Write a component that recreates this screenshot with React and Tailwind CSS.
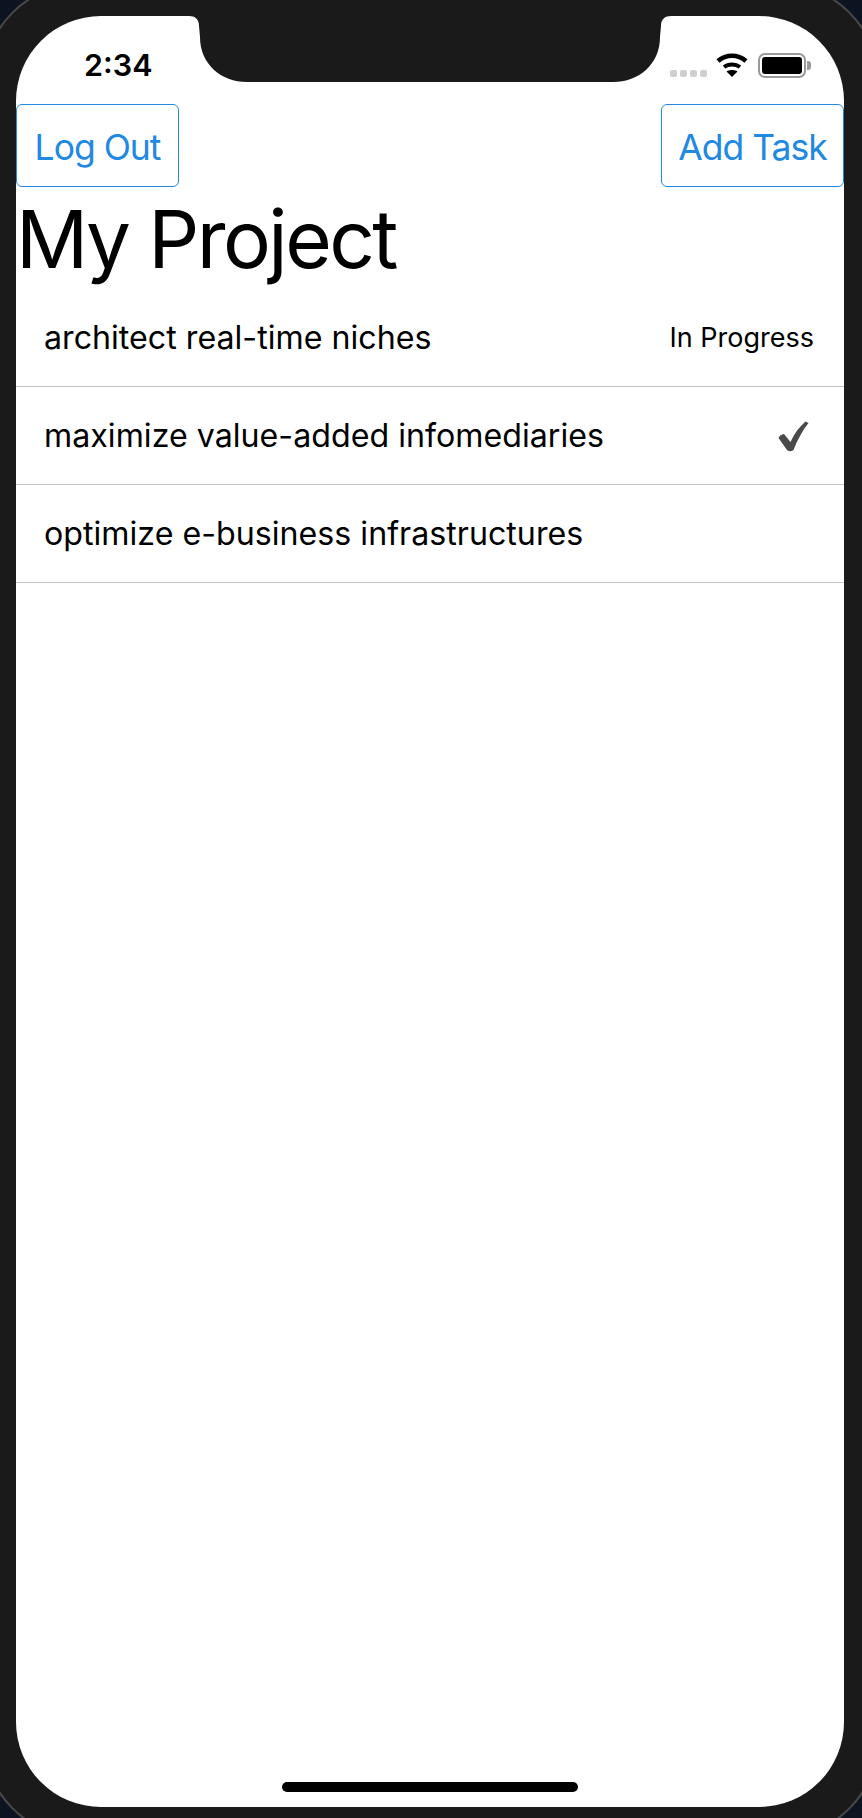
const tasks = [
  { name: "architect real-time niches", status: "In Progress" },
  { name: "maximize value-added infomediaries", status: "Done" },
  { name: "optimize e-business infrastructures", status: null },
];

const Signal = () => (
  <div className="flex gap-[3px] mt-[17px]">
    {[0, 1, 2, 3].map((i) => (
      <div key={i} className="w-[7px] h-[7px] rounded-[2px] bg-[#cfcfcf]" />
    ))}
  </div>
);

const Wifi = () => (
  <svg width="32" height="24" viewBox="0 0 32 24" className="ml-[9px]">
    <path d="M2 8C10 1 22 1 30 8" fill="none" stroke="#000" strokeWidth="4.5" />
    <path d="M8 14C12.5 10.5 19.5 10.5 24 14" fill="none" stroke="#000" strokeWidth="4" />
    <path d="M16 24L10.5 18.5C13.5 16.5 18.5 16.5 21.5 18.5Z" fill="#000" />
  </svg>
);

const Battery = () => (
  <div className="flex items-center ml-[10px]">
    <div className="w-[48px] h-[25px] rounded-[7px] border-2 border-[#999] p-[2px]">
      <div className="w-full h-full rounded-[3px] bg-black" />
    </div>
    <div className="w-[4px] h-[9px] ml-[1px] rounded-r-[3px] bg-[#999]" />
  </div>
);

const Check = () => (
  <svg width="31" height="31" viewBox="0 0 31 31" className="mr-[5px]">
    <path
      d="M0.5 17Q2 13.5 6 13L12.5 21C16 13 21 6 27.5 0.5L30.5 2C24 10 19 20 15.5 29Q12 31.5 9 29Z"
      fill="#4a4a4a"
    />
  </svg>
);

// dark cut-out at the top of the screen, with the small flared corners
const Notch = () => (
  <svg width="482" height="66" viewBox="0 0 482 66" className="absolute top-0 left-[173px]">
    <path
      d="M0 0C6 0 10 3 10 10L11 21C11 48 32 66 58 66H424C450 66 471 48 471 21L472 10C472 3 476 0 482 0Z"
      fill="#1a1a1a"
    />
  </svg>
);

const NavButton = ({ width, children }) => (
  <button className={`${width} h-[83px] pt-1 border border-[#2189e2] rounded-[6px] bg-white text-[#2189e2] text-[35.5px] tracking-[-1px] leading-none`}>
    {children}
  </button>
);

export default function App() {
  return (
    <div
      className="w-[862px] h-[1818px] bg-[#0b1420] overflow-hidden"
      style={{ fontFamily: "Inter, 'Noto Sans', sans-serif" }}
    >
      <div className="w-[898px] h-[1857px] -ml-[18px] -mt-[18px] rounded-[102px] border-2 border-[#484848] bg-[#1a1a1a] pt-[32px] pl-[32px]">
        <div className="relative w-[828px] h-[1791px] rounded-[85px] bg-white overflow-hidden flex flex-col">
          <Notch />

          <div className="h-[88px] flex items-start justify-between">
            <div className="pl-[68px] pt-[31px] text-[30.5px] leading-[36px] font-semibold text-black">
              2:34
            </div>
            <div className="flex items-start pt-[37px] pr-[33px]">
              <Signal />
              <Wifi />
              <Battery />
            </div>
          </div>

          <div className="flex justify-between">
            <NavButton width="w-[163px]">Log Out</NavButton>
            <NavButton width="w-[183px]">Add Task</NavButton>
          </div>

          <h1 className="h-[102px] text-[80px] tracking-[-2.6px] leading-[103px] text-black">My Project</h1>

          <ul>
            {tasks.map((task) => (
              <li
                key={task.name}
                className="h-[98px] pt-[2px] flex items-center justify-between pl-7 pr-[30px] border-b border-[#c4c4c6] text-[32.2px] text-black"
              >
                <span>{task.name}</span>
                {task.status === "Done" ? (
                  <Check />
                ) : (
                  task.status && <span className="text-[27px]">{task.status}</span>
                )}
              </li>
            ))}
          </ul>

          <div className="absolute bottom-[15px] left-[266px] w-[296px] h-[10px] rounded-full bg-black" />
        </div>
      </div>
    </div>
  );
}
